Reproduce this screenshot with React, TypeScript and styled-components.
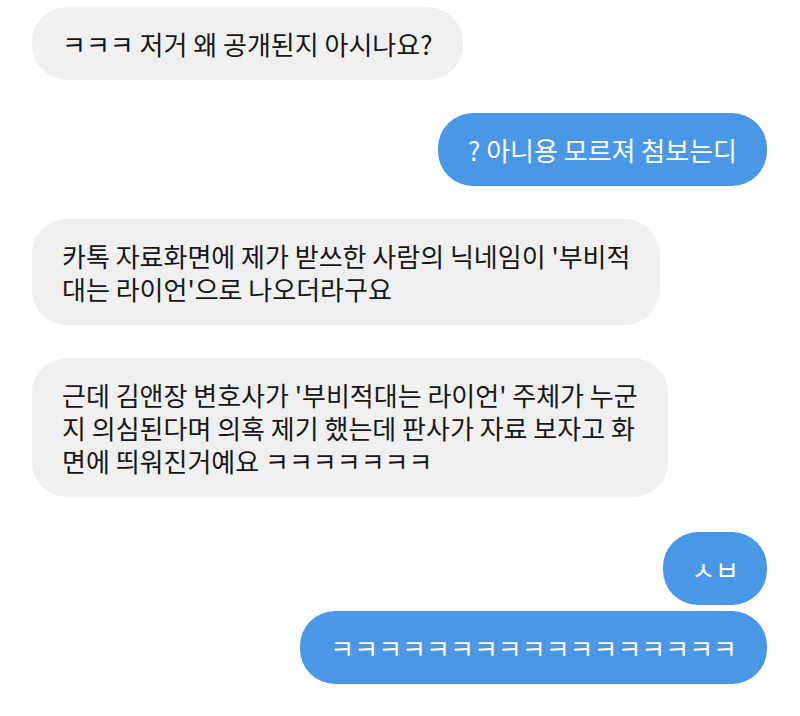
import styled, { createGlobalStyle } from "styled-components";

const GlobalStyle = createGlobalStyle`
  html, body {
    margin: 0;
    padding: 0;
    background: #ffffff;
  }
  body {
    font-family: "Noto Sans CJK KR", "Noto Sans", sans-serif;
  }
`;

const ChatContainer = styled.div`
  display: flex;
  flex-direction: column;
  width: 800px;
  height: 716px;
  padding: 7px 33px 0px 32px;
  box-sizing: border-box;
  overflow: hidden;
`;

const MessageRow = styled.div<{ $mine?: boolean; $gap: number }>`
  display: flex;
  flex-direction: row;
  justify-content: ${({ $mine }) => ($mine ? "flex-end" : "flex-start")};
  margin-top: ${({ $gap }) => $gap}px;
`;

const Bubble = styled.div<{ $mine?: boolean; $pad?: number }>`
  background-color: ${({ $mine }) => ($mine ? "#4b97e7" : "#f0f0f0")};
  color: ${({ $mine }) => ($mine ? "#ffffff" : "#161616")};
  border-radius: 35px;
  padding: 20px ${({ $pad }) => $pad ?? 30}px;
  font-size: 26px;
  line-height: 33px;
  white-space: pre-line;
  width: fit-content;
`;

export default function App() {
  return (
    <>
      <GlobalStyle />
      <ChatContainer>
        <MessageRow $gap={0}>
          <Bubble>ㅋㅋㅋ 저거 왜 공개된지 아시나요?</Bubble>
        </MessageRow>
        <MessageRow $mine $gap={33}>
          <Bubble $mine>? 아니용 모르져 첨보는디</Bubble>
        </MessageRow>
        <MessageRow $gap={33}>
          <Bubble>
            {"카톡 자료화면에 제가 받쓰한 사람의 닉네임이 '부비적\n대는 라이언'으로 나오더라구요"}
          </Bubble>
        </MessageRow>
        <MessageRow $gap={33}>
          <Bubble>
            {"근데 김앤장 변호사가 '부비적대는 라이언' 주체가 누군\n지 의심된다며 의혹 제기 했는데 판사가 자료 보자고 화\n면에 띄워진거예요 ㅋㅋㅋㅋㅋㅋㅋ"}
          </Bubble>
        </MessageRow>
        <MessageRow $mine $gap={35}>
          <Bubble $mine $pad={28}>ㅅㅂ</Bubble>
        </MessageRow>
        <MessageRow $mine $gap={6}>
          <Bubble $mine>ㅋㅋㅋㅋㅋㅋㅋㅋㅋㅋㅋㅋㅋㅋㅋㅋㅋ</Bubble>
        </MessageRow>
      </ChatContainer>
    </>
  );
}
